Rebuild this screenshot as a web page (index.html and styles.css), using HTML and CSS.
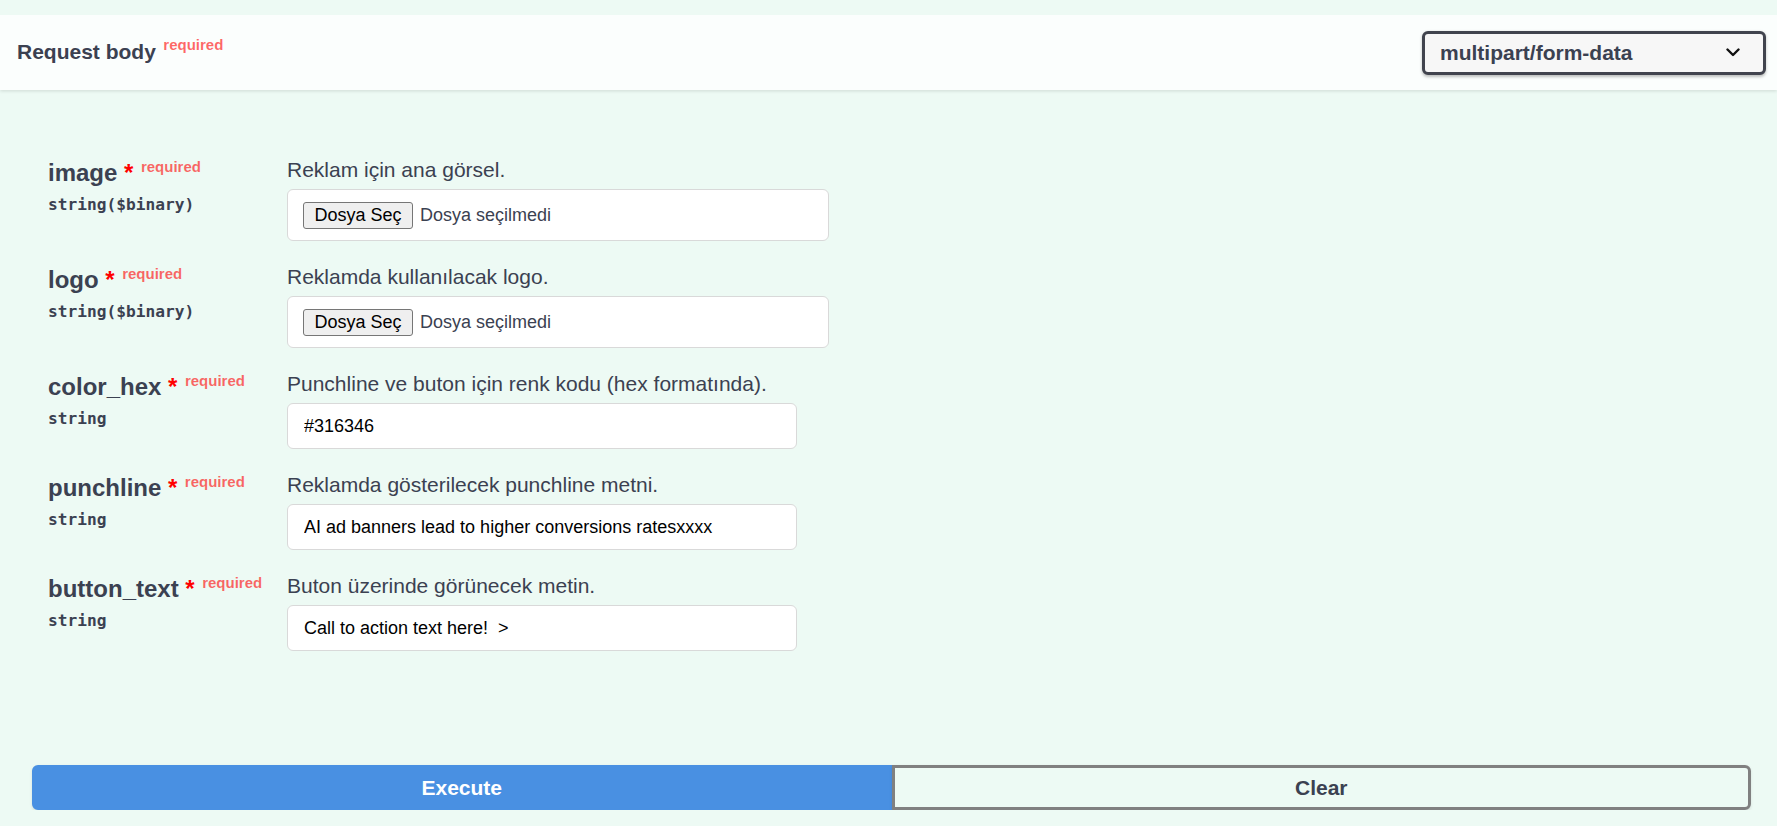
FILE: index.html
```html
<!DOCTYPE html>
<html lang="tr">
<head>
<meta charset="utf-8">
<title>Request body</title>
<link rel="stylesheet" href="styles.css">
</head>
<body>
<div class="page">
  <div class="section-header">
    <h4 class="title">Request body<span class="req">required</span></h4>
    <div class="select">
      <span>multipart/form-data</span>
      <svg class="chev" width="14" height="9" viewBox="0 0 14 9"><path d="M1.5 1.5 L7 7 L12.5 1.5" fill="none" stroke="#111" stroke-width="2.4" stroke-linecap="round" stroke-linejoin="round"/></svg>
    </div>
  </div>

  <div class="params">
    <div class="row">
      <div class="name-col">
        <div class="pname">image<span class="star">&nbsp;*</span><span class="req">required</span></div>
        <div class="ptype">string($binary)</div>
      </div>
      <div class="desc-col">
        <p class="desc">Reklam için ana görsel.</p>
        <div class="file-box"><span class="file-btn">Dosya Seç</span><span class="file-text">Dosya seçilmedi</span></div>
      </div>
    </div>
    <div class="row">
      <div class="name-col">
        <div class="pname">logo<span class="star">&nbsp;*</span><span class="req">required</span></div>
        <div class="ptype">string($binary)</div>
      </div>
      <div class="desc-col">
        <p class="desc">Reklamda kullanılacak logo.</p>
        <div class="file-box"><span class="file-btn">Dosya Seç</span><span class="file-text">Dosya seçilmedi</span></div>
      </div>
    </div>
    <div class="row">
      <div class="name-col">
        <div class="pname">color_hex<span class="star">&nbsp;*</span><span class="req">required</span></div>
        <div class="ptype">string</div>
      </div>
      <div class="desc-col">
        <p class="desc">Punchline ve buton için renk kodu (hex formatında).</p>
        <input class="text-input" type="text" value="#316346">
      </div>
    </div>
    <div class="row">
      <div class="name-col">
        <div class="pname">punchline<span class="star">&nbsp;*</span><span class="req">required</span></div>
        <div class="ptype">string</div>
      </div>
      <div class="desc-col">
        <p class="desc">Reklamda gösterilecek punchline metni.</p>
        <input class="text-input" type="text" value="AI ad banners lead to higher conversions ratesxxxx">
      </div>
    </div>
    <div class="row">
      <div class="name-col">
        <div class="pname">button_text<span class="star">&nbsp;*</span><span class="req">required</span></div>
        <div class="ptype">string</div>
      </div>
      <div class="desc-col">
        <p class="desc">Buton üzerinde görünecek metin.</p>
        <input class="text-input" type="text" value="Call to action text here!  &gt;">
      </div>
    </div>
  </div>

  <div class="btn-group">
    <button class="btn execute">Execute</button>
    <button class="btn clear">Clear</button>
  </div>
</div>
</body>
</html>
```
FILE: styles.css
```css
* { box-sizing: border-box; }

html, body {
  margin: 0;
  padding: 0;
}

body {
  background: #edfaf4;
  font-family: "Liberation Sans", Arial, sans-serif;
  color: #3b4151;
  overflow: hidden;
}

.page {
  padding-top: 15px;
}

.section-header {
  display: flex;
  align-items: center;
  justify-content: space-between;
  height: 75px;
  padding: 0 11px 0 17px;
  background: #fbfefd;
  box-shadow: 0 1.5px 3px rgba(0, 0, 0, 0.1);
}

.title {
  margin: 0;
  font-size: 21px;
  line-height: 24px;
  font-weight: 700;
  color: #3b4151;
}

.req {
  position: relative;
  top: -9px;
  padding-left: 7.5px;
  font-size: 15px;
  font-weight: 700;
  color: rgba(255, 0, 0, 0.6);
}

.select {
  display: flex;
  align-items: center;
  justify-content: space-between;
  width: 344px;
  height: 44px;
  padding: 0 23px 0 15px;
  border: 3px solid #41444e;
  border-radius: 6px;
  background: #f7f7f7;
  box-shadow: 0 1.5px 3px rgba(0, 0, 0, 0.25);
  font-size: 21px;
  font-weight: 700;
  color: #3b4151;
}

.chev {
  display: block;
}

.params {
  display: flex;
  flex-direction: column;
  gap: 24px;
  padding: 68px 0 0 48px;
}

.row {
  display: grid;
  grid-template-columns: 239px 1fr;
}

.pname {
  font-size: 24px;
  line-height: 30px;
  font-weight: 700;
  color: #3b4151;
  white-space: nowrap;
}

.star {
  color: red;
}

.ptype {
  margin-top: 4px;
  font-family: "DejaVu Sans Mono", "Liberation Mono", monospace;
  font-size: 16.2px;
  line-height: 20px;
  font-weight: 700;
  color: #3b4151;
}

.desc {
  margin: 0 0 7px;
  font-size: 21px;
  line-height: 24px;
  color: #3b4151;
}

.file-box {
  display: flex;
  align-items: center;
  gap: 7px;
  width: 542px;
  height: 52px;
  padding: 0 15px;
  border: 1px solid #d9d9d9;
  border-radius: 6px;
  background: #fff;
}

.file-btn {
  display: flex;
  align-items: center;
  height: 27px;
  padding: 0 10.5px;
  border: 1px solid #767676;
  border-radius: 3px;
  background: #efefef;
  font-size: 18px;
  color: #000;
}

.file-text {
  font-size: 18px;
  color: #3b4151;
}

.text-input {
  display: block;
  width: 510px;
  height: 46px;
  margin: 0;
  padding: 0 16px;
  border: 1px solid #d9d9d9;
  border-radius: 6px;
  background: #fff;
  font-family: "Liberation Sans", Arial, sans-serif;
  font-size: 18px;
  color: #000;
  outline: none;
}

.btn-group {
  display: flex;
  padding: 114px 26px 0 32px;
}

.btn {
  flex: 1;
  height: 45px;
  margin: 0;
  font-family: "Liberation Sans", Arial, sans-serif;
  font-size: 21px;
  font-weight: 700;
  border: 3px solid #808080;
  box-shadow: 0 1.5px 3px rgba(0, 0, 0, 0.1);
  cursor: pointer;
}

.execute {
  background: #4990e2;
  border-color: #4990e2;
  color: #fff;
  border-radius: 6px 0 0 6px;
}

.clear {
  background: transparent;
  color: #3b4151;
  border-radius: 0 6px 6px 0;
}
```
